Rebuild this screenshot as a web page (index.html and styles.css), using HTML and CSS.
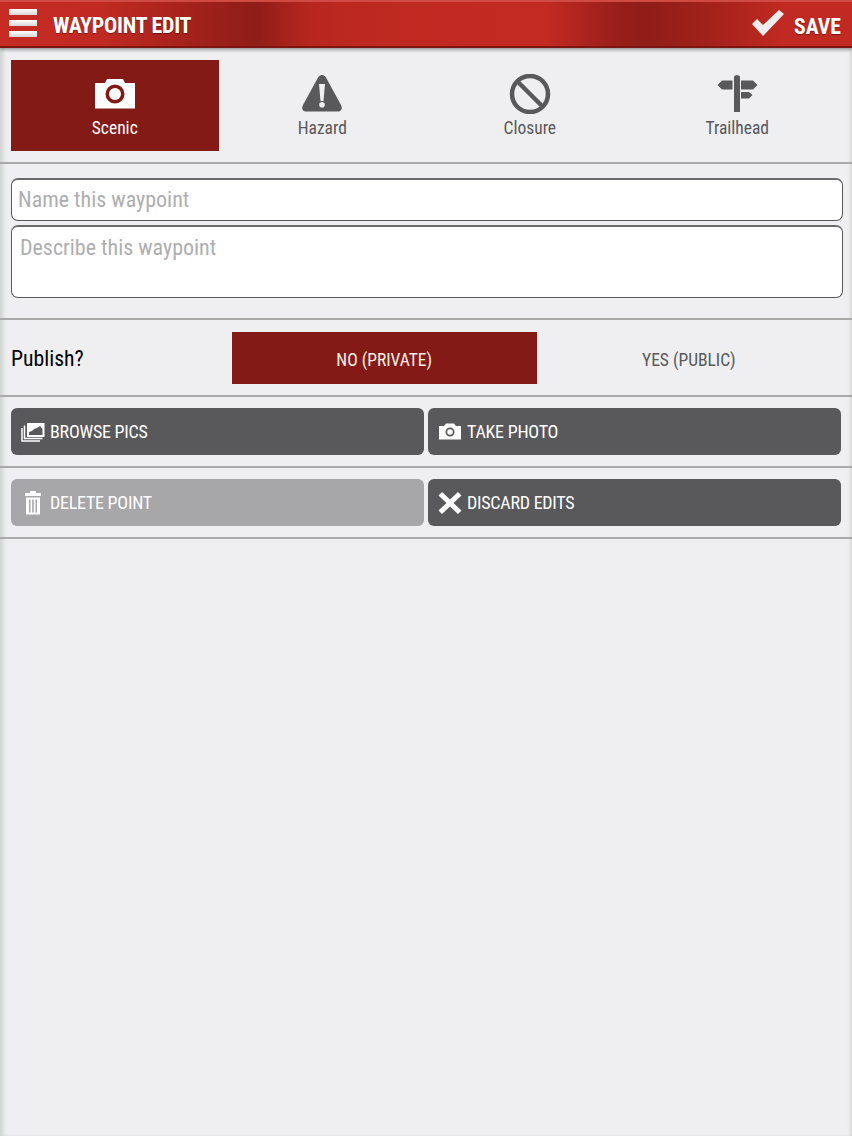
FILE: index.html
```html
<!DOCTYPE html>
<html lang="en">
<head>
  <meta charset="UTF-8" />
  <meta name="viewport" content="width=device-width, initial-scale=1" />
  <title>Waypoint Edit</title>
  <link rel="stylesheet" href="styles.css">
</head>
<body>
  <header class="topbar">
    <div class="menu-icon"><span></span><span></span><span></span></div>
    <h1>WAYPOINT EDIT</h1>
    <button type="button" class="save">
      <svg width="34" height="28" viewBox="0 0 34 28"><path d="M1 15 L6 10 L12 16 L28 1 L33 5 L12 27 Z" fill="#eee"/></svg>
      <span>SAVE</span>
    </button>
  </header>

  <section class="row type-row">
    <div class="type-tab active">
      <svg width="42" height="40" viewBox="0 0 42 40"><path fill-rule="evenodd" fill="currentColor" d="M1 9 H11 L13 5 H29 L31 9 H41 V34.500 H1 Z M21 10.500 A9.500 9.500 0 1 0 21 29.500 A9.500 9.500 0 1 0 21 10.500 Z"/><circle cx="21" cy="20" r="6" fill="currentColor"/></svg>
      <span>Scenic</span>
    </div>
    <div class="type-tab">
      <svg width="42" height="40" viewBox="0 0 42 40"><path fill-rule="evenodd" fill="currentColor" d="M21 1 C23 1 24 2 25 3.500 L40 31 C42 35 40 37.500 37 37.500 H5 C2 37.500 0 35 2 31 L17 3.500 C18 2 19 1 21 1 Z M18 10 L19.500 27 H22.500 L24 10 Z M21 28 A2.800 2.800 0 1 0 21 33.600 A2.800 2.800 0 1 0 21 28 Z"/></svg>
      <span>Hazard</span>
    </div>
    <div class="type-tab">
      <svg width="42" height="40" viewBox="0 0 42 40"><circle cx="21" cy="20" r="18" fill="none" stroke="currentColor" stroke-width="4.500"/><path d="M9 8 L33 32" stroke="currentColor" stroke-width="4.500"/></svg>
      <span>Closure</span>
    </div>
    <div class="type-tab">
      <svg width="42" height="40" viewBox="0 0 42 40"><path fill="currentColor" d="M18 3 C18 2 19 1.500 21 1 C23 1.500 24 2 24 3 V38 H18 Z M16.500 6.500 H6 L1.500 11 L6 15.500 H16.500 Z M25 6.500 H37 L41.500 11 L37 15.500 H25 Z M25 18 H33 L36.500 21 L33 24.500 H25 Z"/></svg>
      <span>Trailhead</span>
    </div>
  </section>

  <section class="row form-row">
    <input class="field name-field" type="text" placeholder="Name this waypoint" />
    <textarea class="field desc-field" placeholder="Describe this waypoint"></textarea>
  </section>

  <section class="row publish-row">
    <div class="publish-label">Publish?</div>
    <div class="publish-opt active">NO (PRIVATE)</div>
    <div class="publish-opt">YES (PUBLIC)</div>
  </section>

  <section class="row btn-row">
    <button type="button" class="btn">
      <svg width="24" height="20" viewBox="0 0 24 20"><path fill="none" stroke="#fff" stroke-width="1.500" d="M1 6 V19 H19"/><path fill="none" stroke="#fff" stroke-width="1.500" d="M3.500 3.500 V16.500 H21.500"/><path fill-rule="evenodd" fill="#fff" d="M6 1 H23.500 V15 H6 Z M8 13 H21.500 V7 L19 4 L16 6 L13 7 L11 9 L8 10 Z"/></svg>
      <span>BROWSE PICS</span>
    </button>
    <button type="button" class="btn">
      <svg width="24" height="17" viewBox="0 0 24 17"><path fill-rule="evenodd" fill="#fff" d="M1 3 H6 L8 0.500 H16 L18 3 H23 V16.500 H1 Z M12 4.500 A4.500 4.500 0 1 0 12 13.500 A4.500 4.500 0 1 0 12 4.500 Z"/><circle cx="12" cy="9" r="2.800" fill="#fff"/></svg>
      <span>TAKE PHOTO</span>
    </button>
  </section>

  <section class="row btn-row">
    <button type="button" class="btn disabled">
      <svg width="24" height="24" viewBox="0 0 24 24"><path fill-rule="evenodd" fill="#fff" d="M9 0 H15 V2 H20 V5 H4 V2 H9 Z M5 6.500 H19 V23.500 H5 Z M8 8.500 V21.500 H9.500 V8.500 Z M11.200 8.500 V21.500 H12.800 V8.500 Z M14.500 8.500 V21.500 H16 V8.500 Z"/></svg>
      <span>DELETE POINT</span>
    </button>
    <button type="button" class="btn">
      <svg width="24" height="24" viewBox="0 0 24 24"><path fill="#fff" d="M4 1 L12 8.500 L20 1 L23.500 4.500 L15.500 12 L23.500 19.500 L20 23 L12 15.500 L4 23 L0.500 19.500 L8.500 12 L0.500 4.500 Z"/></svg>
      <span>DISCARD EDITS</span>
    </button>
  </section>
</body>
</html>
```

FILE: styles.css
```css
* {
  margin: 0;
  padding: 0;
  box-sizing: border-box;
}
body {
  height: 1136px;
  overflow: hidden;
  background: #efeff1;
  box-shadow: inset 5px 0 4px -2px #d0d2d0, inset -3px 0 3px -1px #d8d9d8;
  font-family: Roboto, "Liberation Sans", sans-serif;
  font-stretch: 75%;
  color: #59585a;
}
.topbar {
  height: 48px;
  display: flex;
  align-items: center;
  padding: 0 11px 0 9px;
  color: #fff;
  background: linear-gradient(90deg, #c62b24 0%, #c02a22 12%, #a5221b 22%, #8f1d18 30%, #b5261f 36%, #bd2920 42%, #c32a22 64%, #9a1f1a 72%, #8f1d18 76%, #a5221b 84%, #c12a22 92%, #c12a22 100%);
  border-top: 2px solid #cf4a42;
  border-bottom: 2px solid #7d1510;
  box-shadow: 0 2px 3px rgba(0, 0, 0, 0.35);
  position: relative;
}
.menu-icon {
  width: 28px;
  display: flex;
  flex-direction: column;
  gap: 5px;
  margin-right: 16px;
  align-self: flex-start;
  margin-top: 7px;
}
.menu-icon span {
  height: 6px;
  background: linear-gradient(#fff, #d6d6d6);
}
.topbar h1 {
  font-size: 22px;
  font-weight: 700;
  letter-spacing: -0.25px;
  padding-top: 2px;
  text-shadow: 0 1px 1px rgba(0, 0, 0, 0.4);
}
.save {
  margin-left: auto;
  display: flex;
  align-items: center;
  gap: 9px;
  background: none;
  border: none;
  color: #fff;
  font: inherit;
  font-stretch: 75%;
  font-size: 21.700px;
  font-weight: 700;
  text-shadow: 0 1px 1px rgba(0, 0, 0, 0.4);
}
.save svg {
  margin-bottom: 2px;
}
.save span {
  padding-top: 4px;
}
.row {
  border-bottom: 2px solid #a9a9aa;
  padding: 12px 11px 10px;
}
.type-row {
  display: grid;
  grid-template-columns: repeat(4, 207.500px);
  height: 116px;
}
.type-tab {
  height: 91px;
  display: flex;
  flex-direction: column;
  align-items: center;
  gap: 4px;
  padding-top: 14px;
  font-size: 17.500px;
  line-height: 21px;
}
.type-tab.active {
  background: #831a16;
  color: #fff;
}
.form-row {
  height: 156px;
  padding-top: 14px;
  display: flex;
  flex-direction: column;
  gap: 4px;
}
.field {
  display: block;
  width: 832px;
  border: 1px solid #59585a;
  border-top-width: 2px;
  border-top-color: #6b6b6c;
  border-radius: 7px;
  background: #fff;
  font-family: inherit;
  font-stretch: 75%;
  font-size: 22px;
  outline: none;
  resize: none;
}
.field::placeholder {
  color: #aeaeb0;
  opacity: 1;
}
.name-field {
  height: 43px;
  padding: 0 6px 2px;
}
.desc-field {
  height: 73px;
  padding: 8px 8px;
}
.publish-row {
  height: 77px;
  display: flex;
  align-items: flex-start;
}
.publish-label {
  width: 221px;
  height: 52px;
  display: flex;
  align-items: center;
  color: #000;
  font-size: 21.700px;
}
.publish-opt {
  width: 304.500px;
  height: 52px;
  display: flex;
  align-items: center;
  justify-content: center;
  padding-top: 4px;
  font-size: 17.500px;
}
.publish-opt.active {
  background: #831a16;
  color: #f6eee6;
}
.btn-row {
  display: grid;
  grid-template-columns: 413px 413px;
  gap: 4px;
  padding-top: 11px;
  padding-bottom: 11px;
}
.btn {
  height: 47px;
  display: flex;
  align-items: center;
  gap: 5px;
  padding-left: 10px;
  border: none;
  border-radius: 6px;
  background: #59585a;
  color: #fff;
  font: inherit;
  font-stretch: 75%;
  font-size: 18px;
  letter-spacing: -0.25px;
}
.btn.disabled {
  background: #a7a6a8;
}
```
